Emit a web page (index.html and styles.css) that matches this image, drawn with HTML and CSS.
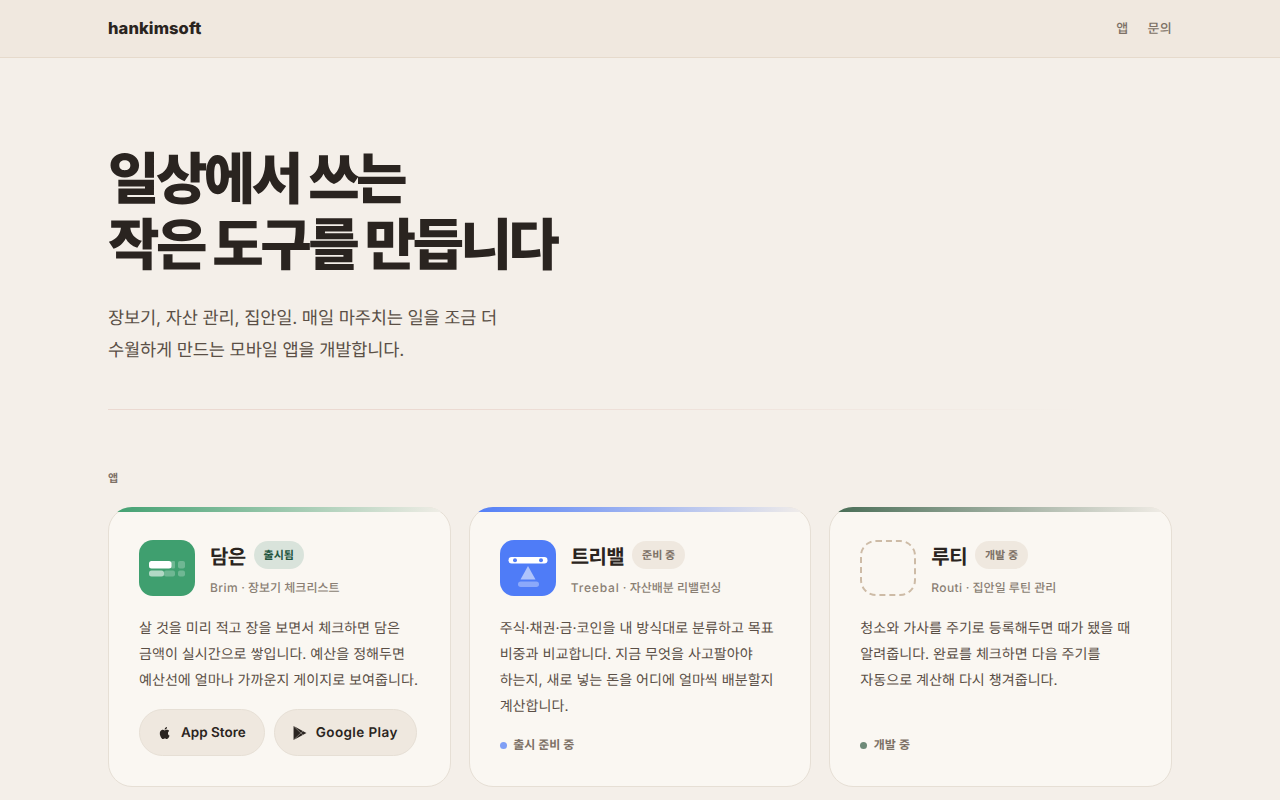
FILE: index.html
```html
<!DOCTYPE html>
<html lang="ko">
<head>
<meta charset="utf-8">
<title>hankimsoft</title>
<link rel="stylesheet" href="styles.css">
</head>
<body>
<header class="nav">
  <div class="wrap nav-in">
    <a class="logo">hankimsoft</a>
    <nav class="links"><a>앱</a><a>문의</a></nav>
  </div>
</header>
<main class="wrap">
  <section class="hero">
    <h1>일상에서 쓰는<br>작은 도구를 만듭니다</h1>
    <p>장보기, 자산 관리, 집안일. 매일 마주치는 일을 조금 더<br>수월하게 만드는 모바일 앱을 개발합니다.</p>
  </section>
  <div class="rule"></div>
  <div class="label">앱</div>
  <section class="grid">
    <article class="card green">
      <div class="head">
        <svg class="icon" viewBox="0 0 56 56"><rect width="56" height="56" rx="14" fill="#3f9f6f"/><rect x="10" y="21" width="22.5" height="7.5" rx="2.5" fill="#fff"/><rect x="10" y="30.5" width="15" height="6" rx="2.5" fill="#fff" fill-opacity=".6"/><rect x="25" y="30.5" width="11" height="6" rx="2" fill="#fff" fill-opacity=".25"/><rect x="32" y="21" width="4" height="7.5" rx="1" fill="#fff" fill-opacity=".25"/><rect x="39" y="21" width="7" height="7.5" rx="2" fill="#fff" fill-opacity=".25"/><rect x="39" y="30.5" width="7" height="6" rx="2" fill="#fff" fill-opacity=".25"/></svg>
        <div class="meta">
          <div class="title"><h2>담은</h2><span class="badge live">출시됨</span></div>
          <div class="sub"><span class="en">Brim</span> · 장보기 체크리스트</div>
        </div>
      </div>
      <p class="desc">살 것을 미리 적고 장을 보면서 체크하면 담은<br>금액이 실시간으로 쌓입니다. 예산을 정해두면<br>예산선에 얼마나 가까운지 게이지로 보여줍니다.</p>
      <div class="stores">
        <a class="store"><svg class="store-ic" viewBox="0 0 24 24"><path d="M17.05 12.54c-.03-2.6 2.12-3.85 2.22-3.91-1.21-1.77-3.09-2.01-3.76-2.04-1.6-.16-3.12.94-3.93.94-.81 0-2.06-.92-3.39-.89-1.74.03-3.35 1.01-4.25 2.57-1.81 3.14-.46 7.8 1.3 10.35.86 1.25 1.89 2.65 3.24 2.6 1.3-.05 1.79-.84 3.36-.84s2.01.84 3.39.81c1.4-.02 2.29-1.27 3.14-2.53.99-1.45 1.4-2.85 1.42-2.93-.03-.01-2.71-1.04-2.74-4.13zM14.5 4.9c.72-.87 1.2-2.08 1.07-3.28-1.03.04-2.28.69-3.02 1.55-.66.77-1.24 2-1.09 3.18 1.15.09 2.32-.58 3.04-1.45z"/></svg>App Store</a>
        <a class="store wide"><svg class="store-ic" viewBox="0 0 24 24"><path d="M1 0 23 12 1 24z"/><path class="play-cut" d="M1 0 13.5 12 1 24M13.5 12 17.5 8.5M13.5 12 17.5 15.5"/></svg>Google Play</a>
      </div>
    </article>
    <article class="card blue">
      <div class="head">
        <svg class="icon" viewBox="0 0 56 56"><rect width="56" height="56" rx="14" fill="#4f7cf7"/><rect x="8.5" y="17" width="39" height="6.5" rx="3.25" fill="#fff"/><circle cx="15" cy="20.2" r="2" fill="#4f7cf7"/><circle cx="41" cy="20.2" r="2" fill="#4f7cf7"/><path d="M28 26l7.5 13.5h-15z" fill="#fff" fill-opacity=".55"/><rect x="18" y="41.5" width="21" height="5.5" rx="2.75" fill="#fff" fill-opacity=".35"/></svg>
        <div class="meta">
          <div class="title"><h2>트리밸</h2><span class="badge">준비 중</span></div>
          <div class="sub"><span class="en-wide">Treebal</span> · 자산배분 리밸런싱</div>
        </div>
      </div>
      <p class="desc">주식·채권·금·코인을 내 방식대로 분류하고 목표<br>비중과 비교합니다. 지금 무엇을 사고팔아야<br>하는지, 새로 넣는 돈을 어디에 얼마씩 배분할지<br>계산합니다.</p>
      <div class="status"><i class="dot dot-blue"></i>출시 준비 중</div>
    </article>
    <article class="card forest">
      <div class="head">
        <div class="icon ghost"></div>
        <div class="meta">
          <div class="title"><h2>루티</h2><span class="badge">개발 중</span></div>
          <div class="sub"><span class="en">Routi</span> · 집안일 루틴 관리</div>
        </div>
      </div>
      <p class="desc">청소와 가사를 주기로 등록해두면 때가 됐을 때<br>알려줍니다. 완료를 체크하면 다음 주기를<br>자동으로 계산해 다시 챙겨줍니다.</p>
      <div class="status"><i class="dot dot-forest"></i>개발 중</div>
    </article>
  </section>
</main>
</body>
</html>
```

FILE: styles.css
```css
* { box-sizing: border-box; }
html, body { margin: 0; height: 800px; overflow: hidden; }
body {
  background: #f4efe9;
  color: #2a2420;
  font-family: Inter, "Noto Sans CJK KR", sans-serif;
  text-rendering: geometricPrecision;
}
.wrap { width: 1064px; margin: 0 auto; }
.nav { height: 58px; background: #f0e8df; border-bottom: 1px solid #e6dacc; }
.nav-in { height: 57px; padding-bottom: 1px; display: flex; align-items: center; justify-content: space-between; }
.logo { font-size: 16.5px; font-weight: 800; letter-spacing: 0.1px; }
.links { display: flex; gap: 19px; margin-bottom: 1px; font-size: 13px; font-weight: 500; letter-spacing: 0.3px; color: #7d7166; }
.hero { padding-top: 88px; }
.hero h1 {
  margin: 0;
  font-size: 56px;
  line-height: 66px;
  font-weight: 800;
  letter-spacing: -3.64px;
  color: #2a2420;
}
.hero p {
  margin: 25px 0 0;
  font-size: 17.6px;
  line-height: 32px;
  color: #5a4f46;
  letter-spacing: -0.176px;
}
.rule {
  height: 1px;
  margin-top: 42px;
  background: linear-gradient(90deg, #ebd9d1, #ebd9d1 30%, #f4efe9 92%);
}
.label { margin-top: 60px; font-size: 11px; line-height: 16px; font-weight: 600; color: #7d7166; }
.grid { margin-top: 21px; display: grid; grid-template-columns: repeat(3, 1fr); gap: 18px; }
.card {
  position: relative;
  height: 280px;
  padding: 32px 30px 0;
  background: #faf7f2;
  border: 1px solid #e6dfd5;
  border-radius: 24px;
  overflow: clip;
  overflow-clip-margin: border-box;
}
.card::before {
  content: "";
  position: absolute;
  inset: -1px -1px auto;
  height: 5px;
}
.green::before { background: linear-gradient(90deg, #3f9f6f, #f4efe9); }
.blue::before { background: linear-gradient(90deg, #4f7cf7, #f4efe9); }
.forest::before { background: linear-gradient(90deg, #466b54, #f4efe9); }
.head { display: flex; gap: 15px; height: 56px; }
.icon { width: 56px; height: 56px; flex: none; display: block; }
.ghost { border: 2px dashed #cdbba6; border-radius: 16px; }
.meta { padding-top: 1px; }
.title { display: flex; align-items: center; gap: 8px; height: 28px; }
.title h2 { margin: 0; font-size: 20px; font-weight: 700; letter-spacing: -0.6px; color: #2a2420; }
.badge {
  height: 28px;
  padding: 0 10px;
  border-radius: 14px;
  background: #efe8df;
  color: #7d7166;
  font-size: 11px;
  font-weight: 600;
  line-height: 28px;
}
.badge.live { background: #d9e3db; color: #24563f; }
.sub { margin-top: 10px; font-size: 12px; line-height: 18px; font-weight: 500; color: #8a7f74; }
.en { letter-spacing: 0.4px; }
.en-wide { letter-spacing: 0.85px; }
.desc {
  margin: 20px 0 0;
  font-size: 14.08px;
  line-height: 26px;
  color: #5a4f46;
}
.stores { display: flex; gap: 9px; margin-top: 15px; }
.store {
  display: flex;
  align-items: center;
  gap: 9px;
  height: 47px;
  padding: 0 18px;
  border: 1px solid #e6dfd5;
  border-radius: 24px;
  background: #efe8df;
  font-size: 13.5px;
  font-weight: 600;
  color: #2a2420;
}
.store.wide { letter-spacing: 0.4px; }
.store-ic { width: 14px; height: 14px; fill: #2a2420; flex: none; }
.play-cut { fill: none; stroke: #efe8df; stroke-width: 0.7; }
.status {
  display: flex;
  align-items: center;
  gap: 6.5px;
  margin-top: 16px;
  font-size: 12px;
  line-height: 18px;
  font-weight: 600;
  color: #7d7166;
}
.forest .status { margin-top: 42px; }
.dot { width: 7px; height: 7px; border-radius: 50%; }
.dot-blue { background: #7f9ff5; }
.dot-forest { background: #6e8a78; }
```
